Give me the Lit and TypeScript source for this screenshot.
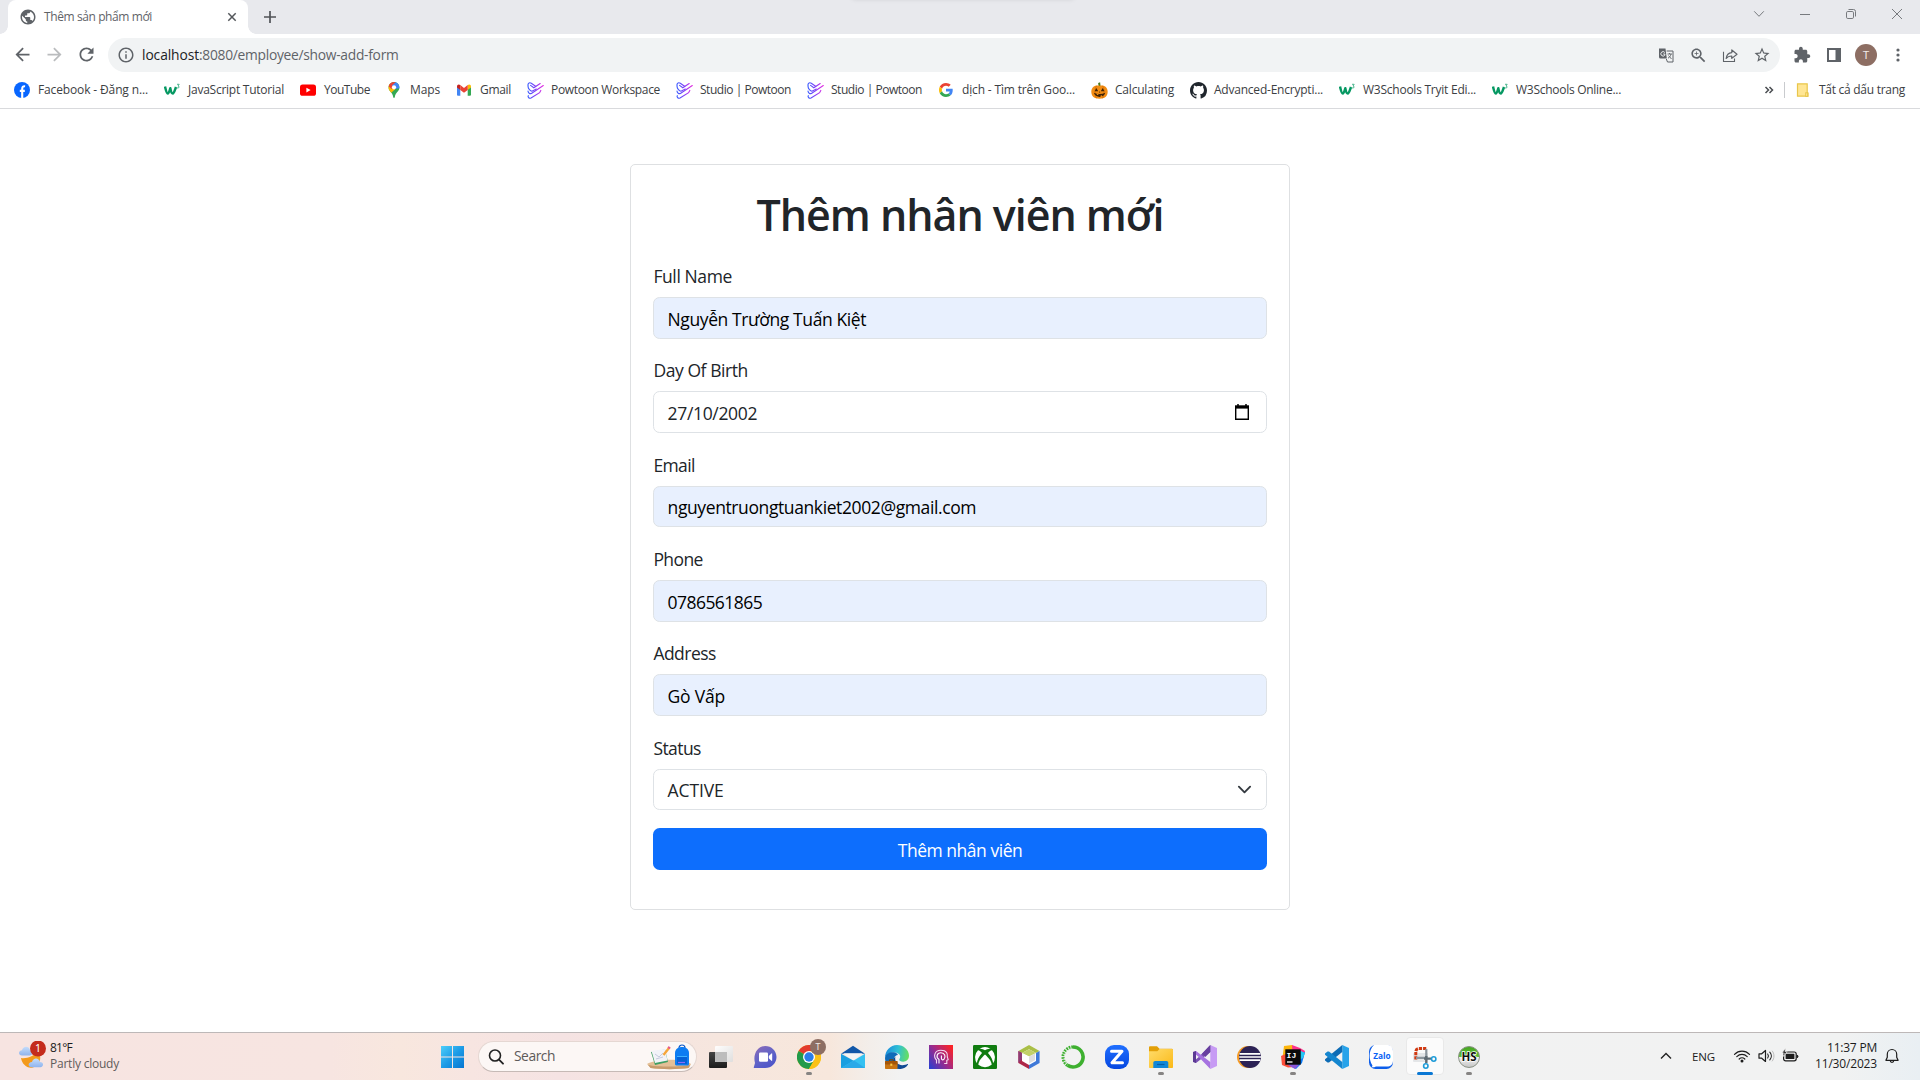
import { LitElement, html, css, svg, TemplateResult } from "lit";
import { customElement, property } from "lit/decorators.js";
import { classMap } from "lit/directives/class-map.js";

/** One line of text whose tracking is adjusted so that it spans a given width. */
@customElement("text-run")
class TextRun extends LitElement {
  @property({ type: Number }) span = 0;
  @property() text = "";

  static styles = css`
    :host { display: inline-block; white-space: pre; }
  `;

  render() {
    return html`<span class="run">${this.text}</span>`;
  }

  updated() {
    const run = this.renderRoot.querySelector(".run") as HTMLElement;
    run.style.letterSpacing = "0";
    const natural = run.getBoundingClientRect().width;
    const count = [...this.text].length;
    if (this.span && count) {
      run.style.letterSpacing = `${(this.span - natural) / count}px`;
    }
  }
}

const icon = (size: number, box: string, body: TemplateResult) =>
  html`<svg width=${size} height=${size} viewBox=${box} fill="none">${body}</svg>`;

const material = (size: number, d: string) => icon(size, "0 0 24 24", svg`<path fill="currentColor" d=${d}/>`);

const BACK = "M20 11H7.83l5.59-5.59L12 4l-8 8 8 8 1.41-1.41L7.83 13H20v-2z";
const FORWARD = "M12 4l-1.41 1.41L16.17 11H4v2h12.17l-5.58 5.59L12 20l8-8z";
const RELOAD =
  "M17.65 6.35C16.2 4.9 14.21 4 12 4c-4.42 0-7.99 3.58-7.99 8s3.57 8 7.99 8c3.73 0 6.84-2.55 7.73-6h-2.08c-.82 2.33-3.04 4-5.65 4-3.31 0-6-2.69-6-6s2.69-6 6-6c1.66 0 3.14.69 4.22 1.78L13 11h7V4l-2.35 2.35z";
const INFO =
  "M11 7h2v2h-2zm0 4h2v6h-2zm1-9C6.48 2 2 6.48 2 12s4.48 10 10 10 10-4.48 10-10S17.52 2 12 2zm0 18c-4.41 0-8-3.59-8-8s3.59-8 8-8 8 3.59 8 8-3.59 8-8 8z";
const STAR =
  "M22 9.24l-7.19-.62L12 2 9.19 8.63 2 9.24l5.46 4.73L5.82 21 12 17.27 18.18 21l-1.63-7.03L22 9.24zM12 15.4l-3.76 2.27 1-4.28-3.32-2.88 4.38-.38L12 6.1l1.71 4.04 4.38.38-3.32 2.88 1 4.28L12 15.4z";
const PUZZLE =
  "M20.5 11H19V7c0-1.1-.9-2-2-2h-4V3.5C13 2.12 11.88 1 10.5 1S8 2.12 8 3.5V5H4c-1.1 0-1.99.9-1.99 2v3.8H3.5c1.49 0 2.7 1.21 2.7 2.7s-1.21 2.7-2.7 2.7H2V20c0 1.1.9 2 2 2h3.8v-1.5c0-1.49 1.21-2.7 2.7-2.7 1.49 0 2.7 1.21 2.7 2.7V22H17c1.1 0 2-.9 2-2v-4h1.5c1.38 0 2.5-1.12 2.5-2.5S21.88 11 20.5 11z";
const ZOOM =
  "M15.5 14h-.79l-.28-.27C15.41 12.59 16 11.11 16 9.5 16 5.91 13.09 3 9.5 3S3 5.91 3 9.5 5.91 16 9.5 16c1.61 0 3.09-.59 4.23-1.57l.27.28v.79l5 4.99L20.49 19l-4.99-5zm-6 0C7.01 14 5 11.99 5 9.5S7.01 5 9.5 5 14 7.01 14 9.5 11.99 14 9.5 14zm2.5-4h-2v2H9v-2H7V9h2V7h1v2h2v1z";
const GLOBE =
  "M12 2C6.48 2 2 6.48 2 12s4.48 10 10 10 10-4.48 10-10S17.52 2 12 2zm-1 17.93c-3.95-.49-7-3.85-7-7.93 0-.62.08-1.21.21-1.79L9 15v1c0 1.1.9 2 2 2v1.93zm6.9-2.54c-.26-.81-1-1.39-1.9-1.39h-1v-3c0-.55-.45-1-1-1H8v-2h2c.55 0 1-.45 1-1V7h2c1.1 0 2-.9 2-2v-.41c2.93 1.19 5 4.06 5 7.41 0 2.08-.8 3.97-2.1 5.39z";
const GITHUB =
  "M8 0C3.58 0 0 3.58 0 8c0 3.54 2.29 6.53 5.47 7.59.4.07.55-.17.55-.38 0-.19-.01-.82-.01-1.49-2.01.37-2.53-.49-2.69-.94-.09-.23-.48-.94-.82-1.13-.28-.15-.68-.52-.01-.53.63-.01 1.08.58 1.23.82.72 1.21 1.87.87 2.33.66.07-.52.28-.87.51-1.07-1.78-.2-3.64-.89-3.64-3.95 0-.87.31-1.59.82-2.15-.08-.2-.36-1.02.08-2.12 0 0 .67-.21 2.2.82.64-.18 1.32-.27 2-.27s1.36.09 2 .27c1.53-1.04 2.2-.82 2.2-.82.44 1.1.16 1.92.08 2.12.51.56.82 1.27.82 2.15 0 3.07-1.87 3.75-3.65 3.95.29.25.54.73.54 1.48 0 1.07-.01 1.93-.01 2.2 0 .21.15.46.55.38A8.01 8.01 0 0016 8c0-4.42-3.58-8-8-8z";

/* ---------- bookmark favicons, 16px ---------- */

const facebook = () => icon(16, "0 0 16 16", svg`
  <circle cx="8" cy="8" r="8" fill="#0866ff"/>
  <path d="M8.2 16V7c0-2 .8-2.9 2.9-2.7M5.8 8.9h5" stroke="#fff" stroke-width="2.1"/>`);

const w3 = () => icon(16, "0 0 16 16", svg`
  <path d="M1 4.600C2 9 2.700 11.500 3.700 11.500S5.500 9 6.300 6.300C6.900 9.500 7.700 11.500 8.800 11.500S10.900 8 12 5" stroke="#059862" stroke-width="2.500" stroke-linejoin="round"/>
  <path d="M13 2.300h2.200L14 4c1.600.1 1.500 2-.1 2-.5 0-.9-.2-1.100-.5" stroke="#3aae83" stroke-width=".9"/>`);

const youtube = () => icon(16, "0 0 16 16", svg`
  <rect y="2.4" width="16" height="11.4" rx="2.6" fill="#f00"/>
  <path d="M6.4 5.7 10.6 8.1 6.4 10.5z" fill="#fff"/>`);

const maps = () => icon(16, "0 0 16 16", svg`
  <path d="M8 0C5 0 2.6 2.4 2.6 5.4c0 1.5.5 2.6 1.3 3.7C5.700 11.300 6.800 12.500 7.200 15c.2 1.300 1.400 1.300 1.600 0 .4-2.500 1.500-3.700 3.300-5.900.8-1.100 1.300-2.200 1.300-3.700C13.400 2.400 11 0 8 0z" fill="#34a853"/>
  <path d="M3.900 9.100C3.100 8 2.600 6.900 2.600 5.400c0-1.300.4-2.400 1.200-3.400L9.700 6.800 5.200 10.700z" fill="#fbbc04"/>
  <path d="M3.800 2C4.800.8 6.300 0 8 0l1.700.3L5.800 7 2.700 4.500C2.800 3.500 3.200 2.700 3.800 2z" fill="#ea4335"/>
  <path d="M9.700.3c2.100.7 3.700 2.700 3.700 5.100l-.1.900L9.300 7 5.900 3.600z" fill="#4285f4"/>
  <circle cx="8" cy="5.300" r="2.100" fill="#fff"/>`);

const gmail = () => icon(16, "0 0 16 16", svg`
  <path d="M1 4.500v8.300c0 .5.4.9.9.9h2.400V7z" fill="#4285f4"/>
  <path d="M15 4.500v8.300c0 .5-.4.9-.9.9h-2.400V7z" fill="#34a853"/>
  <path d="M1 4.600C1 2.500 2.800 2 4.300 3.100V8L1 5.600z" fill="#c5221f"/>
  <path d="M15 4.600C15 2.500 13.200 2 11.700 3.100V8L15 5.600z" fill="#fbbc04"/>
  <path d="M4.300 3.100 8 5.900l3.700-2.800V8L8 10.700 4.300 8z" fill="#ea4335"/>`);

const powtoon = () => icon(17, "0 0 17 17", svg`
  <defs><linearGradient id="pt" x1="1" y1="0" x2="16" y2="0" gradientUnits="userSpaceOnUse">
    <stop stop-color="#3c5cff"/><stop offset=".55" stop-color="#8b3df5"/><stop offset="1" stop-color="#e52ee0"/></linearGradient></defs>
  <g stroke="url(#pt)" stroke-width="1.150" stroke-linecap="round">
    <path d="M8.600 4.300 4.300 1.200C2.800.2.900 1 1 2.900L1.100 4.800C1.200 6.800 3.300 9 5 9.200L9.300 7"/>
    <path d="M13.200 1.600 6.800 5.800 3.600 3.400"/>
    <path d="M16.300 3.500 4.400 11.400C2.800 12.300 1.200 11 1 9"/>
    <path d="M13.800 8.400 12.600 10.700 4 16C2.300 16.900.6 15.200 1.300 13.700"/>
  </g>`);

const google = () => icon(14, "0 0 48 48", svg`
  <path fill="#EA4335" d="M24 9.500c3.540 0 6.710 1.220 9.210 3.600l6.850-6.850C35.900 2.380 30.470 0 24 0 14.620 0 6.510 5.380 2.560 13.220l7.980 6.190C12.430 13.720 17.740 9.500 24 9.500z"/>
  <path fill="#4285F4" d="M46.980 24.550c0-1.570-.15-3.090-.38-4.550H24v9.020h12.940c-.58 2.960-2.260 5.480-4.780 7.180l7.730 6c4.510-4.180 7.090-10.360 7.090-17.650z"/>
  <path fill="#FBBC05" d="M10.530 28.590c-.48-1.450-.76-2.990-.76-4.590s.27-3.140.76-4.590l-7.980-6.190C.92 16.460 0 20.120 0 24c0 3.880.92 7.540 2.560 10.780l7.970-6.190z"/>
  <path fill="#34A853" d="M24 48c6.480 0 11.930-2.130 15.890-5.810l-7.730-6c-2.150 1.450-4.920 2.300-8.160 2.300-6.260 0-11.570-4.220-13.470-9.910l-7.980 6.190C6.510 42.620 14.620 48 24 48z"/>`);

const pumpkin = () => icon(17, "0 0 16 16", svg`
  <path d="M7.200 4 6.700 1 8.600.2 9 4z" fill="#4c7a1f"/>
  <path d="M8 3.500C3.500 2.300.3 5 .3 9.200s2.800 6.500 7.700 6.500 7.700-2.300 7.700-6.500S12.500 2.300 8 3.500z" fill="#f28c13"/>
  <path d="M5.300 3.600c-2 2.800-2 8.500 0 11.800M10.700 3.600c2 2.800 2 8.500 0 11.800" stroke="#d06c05" stroke-width=".7"/>
  <path d="M3.400 8.600 5 5.700l1.800 2.900zM9.200 8.600 11 5.700l1.700 2.900zM7.400 9.900l.7-1.100.7 1.100zM2.700 10.200c3.200 1.500 7.500 1.500 10.700 0-.6 2.600-2.600 3.800-5.300 3.800s-4.700-1.200-5.400-3.800z" fill="#402306"/>
  <path d="M5.500 11v1.300h1.400v-1.100zM9 12.700V14h1.400v-1.500z" fill="#f28c13"/>`);

const github = () => icon(17, "0 0 16 16", svg`<path fill="#20262d" d=${GITHUB}/>`);

/* ---------- taskbar app icons, 24px ---------- */

const taskView = () => icon(26, "0 0 26 26", svg`
  <defs><linearGradient id="tv1" x1="0" y1="0" x2="0" y2="1"><stop stop-color="#454545"/><stop offset="1" stop-color="#1c1c1c"/></linearGradient>
  <linearGradient id="tv2" x1="0" y1="0" x2="1" y2="1"><stop stop-color="#fff"/><stop offset="1" stop-color="#dedede"/></linearGradient></defs>
  <rect x="1" y="8" width="18" height="16" rx="1" fill="url(#tv1)"/>
  <rect x="7" y="2" width="18" height="16" rx="1" fill="url(#tv2)" opacity=".95"/>
  <rect x="7" y="8" width="12" height="10" fill="#bdbdbd"/>`);

const chat = () => icon(24, "0 0 24 24", svg`
  <defs><linearGradient id="ch" x1="4" y1="1" x2="18" y2="23" gradientUnits="userSpaceOnUse"><stop stop-color="#8a6bb9"/><stop offset=".5" stop-color="#6264c7"/><stop offset="1" stop-color="#4b53c9"/></linearGradient></defs>
  <path d="M12.200 1C18.500 1 23.500 5.900 23.500 12s-5 11-11.300 11H1.500c-1 0-.8-.8-.5-1.500L2 18C-.5 9 5 1 12.200 1z" fill="url(#ch)"/>
  <rect x="6" y="7.500" width="9" height="9.200" rx="1.300" fill="#fff"/><path d="M15.800 11 18.700 8.300c.3 0 .5.200.5.500v6.600c0 .3-.2.500-.5.500L15.800 13.300z" fill="#fff"/>`);

const chrome = () => icon(24, "0 0 24 24", svg`
  <circle cx="12" cy="12" r="12" fill="#fbc116"/>
  <path d="M12 12 1.600 6A12 12 0 0 1 22.400 6z" fill="#e33b2e"/>
  <path d="M1.600 6A12 12 0 0 0 12 24L17.200 15 12 12z" fill="#229a4a"/>
  <path d="M12 6H22.400A12 12 0 0 1 12 24L17.200 15z" fill="#fbc116"/>
  <circle cx="12" cy="12" r="6" fill="#fff"/><circle cx="12" cy="12" r="4.700" fill="#2b7de9"/>`);

const mail = () => icon(24, "0 0 24 24", svg`
  <path d="M0 8.800 12 .8l12 8z" fill="#1257a8"/>
  <path d="M2.500 8.300h19L12 16z" fill="#f5f5f5"/>
  <path d="M0 8.800 14 16.500 24 23H0z" fill="#1a9fe0"/>
  <path d="M24 8.800V23H0z" fill="#35c1f1"/><path d="M0 23 13 15.500 24 23z" fill="#2aa9e8"/>`);

const edge = () => icon(24, "0 0 24 24", svg`
  <defs><linearGradient id="eg" x1="1" y1="6" x2="24" y2="10" gradientUnits="userSpaceOnUse"><stop stop-color="#1b8fdc"/><stop offset=".5" stop-color="#2fc0d5"/><stop offset="1" stop-color="#6be05a"/></linearGradient></defs>
  <path d="M12 0C18.600 0 24 4.900 24 10.500c0 4-2.600 6.200-5.800 6.200-2.500 0-4-.8-4-1.900 0-.8 1-1.300 1-3.300 0-2.300-2.700-4-6.200-4C5 7.500 1 9.500 0 13 0 5.500 5.400 0 12 0z" fill="url(#eg)"/>
  <path d="M0 13C.6 9 4.600 7 8.600 7.300c2.400.2 4 1.400 4.300 2.700C9 10.500 8 14 9.700 17.500c1 2.200 3 4 5.500 5.600-1 .6-2 .9-3.200.9C5 24 0 19 0 13z" fill="#0f6bb8"/>
  <path d="M10.500 11.500c-1.500 5 2.500 9 7 8.700 2 0 3.800-.6 4.900-1.100.6-.2.8.2.5.7C21 22.700 17.400 24.300 14 24c-3-1-6-4-5.500-8.500.1-2 .9-3.300 2-4z" fill="#104a93"/>
  <rect y="16" width="12.500" height="8" rx=".8" fill="#c87412"/><rect y="16" width="12.500" height="3.500" rx=".8" fill="#a45508"/><rect x="5.300" y="18.600" width="2" height="2.200" fill="#f7c948"/>
  <path d="M4.500 16v-1.200h3.700V16" stroke="#7a4207"/>`);

const mindHead = () => icon(24, "0 0 24 24", svg`
  <defs><linearGradient id="mh" x1="0" y1="22" x2="24" y2="4" gradientUnits="userSpaceOnUse"><stop stop-color="#2b3ed0"/><stop offset=".5" stop-color="#9b2b8d"/><stop offset="1" stop-color="#fb2327"/></linearGradient></defs>
  <rect width="24" height="24" fill="url(#mh)"/>
  <path d="M7.500 18.500V15C4 11.500 5.500 5.300 11.800 5.300S18.700 9 18.300 12l.9 2.700-1.400.6v3.200h-2.600" stroke="#f3d9f0" stroke-width="1.100"/>
  <path d="M10 18.500v-4C6.500 12 8 7.800 11.900 7.800s5.200 4 3.100 6.300c-1.300 1.300-2.600.8-2.600-.8V10.500" stroke="#fff" stroke-width="1.100"/>`);

const xbox = () => icon(24, "0 0 24 24", svg`
  <rect width="24" height="24" rx="1.200" fill="#107c10"/>
  <path d="M12 9.500C15 12 19 17 18.600 19.700a10 10 0 0 1-13.200 0C5 17 9 12 12 9.500z" fill="#fff"/>
  <path d="M5 5.300C6.500 5.500 8 6.800 9 8 5.500 12 3.800 16 4 18.200A10 10 0 0 1 5 5.300z" fill="#fff"/>
  <path d="M19 5.300C17.500 5.500 16 6.800 15 8c3.500 4 5.200 8 5 10.200A10 10 0 0 0 19 5.300z" fill="#fff"/>
  <path d="M6.500 3.800A10 10 0 0 1 17.500 3.800C15.500 3.300 13.500 4.300 12 5.300 10.500 4.300 8.500 3.300 6.500 3.800z" fill="#fff"/>`);

const netbeans = () => icon(24, "0 0 24 24", svg`
  <path d="M12 0 22.600 6v12L12 24 1.400 18V6z" fill="#fff"/>
  <path d="M12 0 22.600 6 19 8 12 4.200 5 8 1.400 6z" fill="#a9bf47"/>
  <path d="M5 8 12 4.200 19 8 12 11.500z" fill="#c2d069"/>
  <path d="M1.400 6 5 8v8l7 4v4L1.400 18z" fill="#ad2748"/><path d="M1.400 6 5 8v6L1.400 18z" fill="#8d3c76"/>
  <path d="M22.600 6 19 8v8l-7 4v4l10.600-6z" fill="#3f79d8"/>
  <path d="M6 8.500 12 11.500V18.500L6 15.200z" fill="#fff"/><path d="M18 8.500 12 11.500V18.500L18 15.200z" fill="#dedee0"/>`);

const anaconda = () => icon(24, "0 0 24 24", svg`
  <path d="M12 2a10 10 0 1 1-5.500 18.300" stroke="#3eb030" stroke-width="3.600"/>
  <path d="M12 2A10 10 0 0 0 6.500 20.300" stroke="#3eb030" stroke-width="3.200" stroke-dasharray="1.700 .9"/>
  <path d="M9.500 3.800A9 9 0 0 0 6.300 19" stroke="#f2f2f2" stroke-width=".8" stroke-dasharray="2 1"/>`);

const zApp = () => icon(24, "0 0 24 24", svg`
  <defs><linearGradient id="za" x1="0" y1="0" x2="0" y2="1"><stop stop-color="#1f6fff"/><stop offset="1" stop-color="#0647e0"/></linearGradient></defs>
  <rect width="24" height="24" rx="9" fill="url(#za)"/>
  <path d="M6.500 6.200H17L7 17.800H17.500" stroke="#fff" stroke-width="3" stroke-linecap="round" stroke-linejoin="round"/>`);

const explorer = () => icon(24, "0 0 24 24", svg`
  <defs><linearGradient id="fx" x1="0" y1="0" x2="1" y2="1"><stop stop-color="#ffdc6b"/><stop offset="1" stop-color="#fbb917"/></linearGradient></defs>
  <path d="M0 2.500C0 1.700.5 1.200 1.300 1.200H8L10.500 3.700H22.500c.8 0 1.500.6 1.500 1.400V10H0z" fill="#e3a008"/>
  <path d="M0 6.200H8.300L10.600 3.900H22.800c.7 0 1.200.5 1.200 1.200V22c0 .6-.4 1-1 1H1c-.6 0-1-.4-1-1z" fill="url(#fx)"/>
  <path d="M4.300 23v-5.300c0-1 .8-1.800 1.800-1.800H17.500c1 0 1.800.8 1.800 1.800V23z" fill="#1287d6"/><path d="M8 19.500h7.500" stroke="#075fa5" stroke-width="1.200"/>`);

const visualStudio = () => icon(24, "0 0 24 24", svg`
  <path d="M17.300 0 24 3v18l-6.700 3z" fill="#c79bf4"/>
  <path d="M17.300 0 5.500 12.300 2.200 15 0 14.200 1 17l2 1 14.300-11z" fill="#7a52b4"/>
  <path d="M17.300 24 5.500 11.700 2.200 9 0 9.800V7l3-1 14.300 11z" fill="#a673e0"/>
  <path d="M0 7 3 6v12l-3-1z" fill="#5c3a94"/><path d="M17.300 0 9 8.700l3.300 3.200 5-4.900z" fill="#68409f"/>`);

const eclipse = () => icon(24, "0 0 24 24", svg`
  <circle cx="11" cy="12" r="11" fill="#f59a23"/><circle cx="13" cy="12" r="11" fill="#2c2255"/>
  <path d="M2.500 8.900H23.300M2.200 12H24M2.500 15.100H23.300" stroke="#fff" stroke-width="1.600"/>`);

const intellij = () => icon(24, "0 0 24 24", svg`
  <path d="M3 1 11 0l3 4-4 8-9 4z" fill="#fdb60d"/><path d="M11 0l8 3 5 3-2 8-10 2z" fill="#ff318c"/>
  <path d="M24 7 21 18l-6 6-8-4 6-8z" fill="#087cfa"/><path d="M0 11l7-3 6 14-6 .5L1 20z" fill="#fc4f3a"/><path d="M18 5l6 3-2 5-4 2z" fill="#24c8f5"/><path d="M7 20l7 4 4-4-8-3z" fill="#8b57d8"/>
  <rect x="4.300" y="4.300" width="15.400" height="15.400" fill="#0a0a0a"/>
  <text class="logo-ij" x="5.600" y="12.800" fill="#fff">IJ</text><path d="M6 17h5.500" stroke="#fff" stroke-width="1.300"/>`);

const vscode = () => icon(24, "0 0 24 24", svg`
  <path d="M17.300 0 24 3v18l-6.700 3z" fill="#27a3ea"/>
  <path d="M17.300 0v7L4 17.500 2.500 17.600 0 15.500v-1.300z" fill="#0d6cb5"/>
  <path d="M17.300 24v-7L4 6.500 2.500 6.400 0 8.500v1.300z" fill="#1486cf"/>`);

const zalo = () => icon(24, "0 0 24 24", svg`
  <rect width="24" height="24" rx="6.500" fill="#0c5eea"/>
  <path d="M9 0h9c4 0 6 2.500 6 6.500v9c0 4-2.500 6-6 6H7c-1.500.7-3 1-4.500.8 1-.9 1-1.700.7-2.300C-.5 14-.5 5 5 0z" fill="#fff"/>
  <text class="logo-zalo" x="4.200" y="14" fill="#0b63f5" textLength="17.500" lengthAdjust="spacingAndGlyphs">Zalo</text>`);

const snip = () => icon(24, "0 0 24 24", svg`
  <rect x="0" y="8" width="15" height="9" rx="1" fill="#e4e6e8"/>
  <path d="M2.800 14.500v-8a3.200 3.200 0 0 1 3-3h8" stroke="#d13a12" stroke-width="3" stroke-dasharray="3.200 1"/>
  <path d="M3 12.800h10.300V4" stroke="#8b959c" stroke-width="2.200"/><path d="M13.300 11v7M11 13.600h7" stroke="#5f6b73" stroke-width="2.400"/>
  <circle cx="12.800" cy="21" r="2.200" stroke="#1d9bd8" stroke-width="1.600"/><circle cx="20.700" cy="14" r="2.200" stroke="#1d9bd8" stroke-width="1.600"/>`);

const heidi = () => icon(24, "0 0 24 24", svg`
  <defs><linearGradient id="hs" x1="0" y1="0" x2="0" y2="1"><stop stop-color="#43a51f"/><stop offset=".5" stop-color="#62c23a"/><stop offset=".51" stop-color="#f3f3f3"/><stop offset="1" stop-color="#c3c3c3"/></linearGradient></defs>
  <circle cx="12" cy="12" r="10.500" fill="url(#hs)" stroke="#8c9388" stroke-width="1"/>
  <text class="logo-hs" x="12" y="16.200" fill="#111" stroke="#fff" stroke-width="1.400" paint-order="stroke" text-anchor="middle">HS</text>`);

interface TaskApp { draw: () => TemplateResult; running?: boolean; active?: boolean; badge?: string; }

const APPS: TaskApp[] = [
  { draw: taskView }, { draw: chat }, { draw: chrome, running: true, badge: "T" }, { draw: mail }, { draw: edge },
  { draw: mindHead }, { draw: xbox }, { draw: netbeans }, { draw: anaconda }, { draw: zApp },
  { draw: explorer, running: true }, { draw: visualStudio }, { draw: eclipse }, { draw: intellij, running: true },
  { draw: vscode }, { draw: zalo }, { draw: snip, active: true }, { draw: heidi, running: true },
];

const BOOKMARKS: { draw: () => TemplateResult; title: string; span: number }[] = [
  { draw: facebook, title: "Facebook - Đăng n...", span: 110 },
  { draw: w3, title: "JavaScript Tutorial", span: 96 },
  { draw: youtube, title: "YouTube", span: 46 },
  { draw: maps, title: "Maps", span: 30 },
  { draw: gmail, title: "Gmail", span: 31 },
  { draw: powtoon, title: "Powtoon Workspace", span: 109 },
  { draw: powtoon, title: "Studio | Powtoon", span: 91 },
  { draw: powtoon, title: "Studio | Powtoon", span: 91 },
  { draw: google, title: "dịch - Tìm trên Goo...", span: 113 },
  { draw: pumpkin, title: "Calculating", span: 59 },
  { draw: github, title: "Advanced-Encrypti...", span: 109 },
  { draw: w3, title: "W3Schools Tryit Edi...", span: 113 },
  { draw: w3, title: "W3Schools Online...", span: 105 },
];

const FIELDS: { label: string; labelSpan: number; value: string; span: number; kind: "filled" | "date" | "select" }[] = [
  { label: "Full Name", labelSpan: 78.5, value: "Nguyễn Trường Tuấn Kiệt", span: 198.5, kind: "filled" },
  { label: "Day Of Birth", labelSpan: 94.5, value: "27/10/2002", span: 89.5, kind: "date" },
  { label: "Email", labelSpan: 41.5, value: "nguyentruongtuankiet2002@gmail.com", span: 308.5, kind: "filled" },
  { label: "Phone", labelSpan: 49.5, value: "0786561865", span: 94.5, kind: "filled" },
  { label: "Address", labelSpan: 62.5, value: "Gò Vấp", span: 57.5, kind: "filled" },
  { label: "Status", labelSpan: 47.5, value: "ACTIVE", span: 56, kind: "select" },
];

@customElement("browser-chrome")
class BrowserChrome extends LitElement {
  static styles = css`
    :host { display: block; color: #5f6368; }
    svg { display: block; flex: none; }
    .strip { position: relative; height: 34px; background: #e8e9ed; display: flex; padding-left: 8px; }
    .strip-shadow { position: absolute; left: 852px; top: -7px; width: 222px; height: 5px; border-radius: 4px; box-shadow: 0 1px 5px rgba(0, 0, 0, 0.13); }
    .tab { position: relative; width: 240px; box-sizing: border-box; background: #fff; border-radius: 8px 8px 0 0; display: flex; align-items: center; padding: 0 9px 0 11px; }
    .tab::before, .tab::after { content: ""; position: absolute; bottom: 0; width: 8px; height: 8px; }
    .tab::before { left: -8px; background: radial-gradient(circle at 0 0, transparent 7.5px, #fff 8px); }
    .tab::after { right: -8px; background: radial-gradient(circle at 100% 0, transparent 7.5px, #fff 8px); }
    .tab-title { margin: -1px 0 0 7px; flex: 1; }
    .new-tab { width: 44px; display: grid; place-items: center; height: 34px; }
    .window { margin-left: auto; display: flex; color: #777a7e; height: 28px; }
    .window span { width: 46px; display: grid; place-items: center; }
    .toolbar { height: 38px; display: flex; align-items: center; padding-top: 4px; box-sizing: border-box; background: #fff; }
    .nav { width: 32px; display: grid; place-items: center; margin-top: -1px; }
    .nav.first { margin-left: 6px; }
    .nav.off { color: #babcbe; }
    .omni { width: 1672px; height: 34px; border-radius: 17px; background: #f1f3f4; margin-left: 6px; box-sizing: border-box; padding: 0 2px 0 9px; display: flex; align-items: center; }
    .url { flex: 1; font-size: 13.8px; margin: -1px 0 0 7px; display: flex; }
    .host { color: #202124; }
    .slot { width: 32px; height: 34px; display: grid; place-items: center; flex: none; }
    .ext { margin-left: 6px; }
    .avatar { width: 22px; height: 22px; border-radius: 50%; background: #8d6e63; color: #f1eae8; font: 11px Roboto, "Noto Sans", sans-serif; display: grid; place-items: center; }
    .marks { height: 36px; display: flex; align-items: center; gap: 16px; padding: 0 15px 0 14px; background: #fff; border-bottom: 1px solid #d9dadd; color: #3c4043; }
    .marks text-run { margin-top: -2px; }
    .mark { display: flex; align-items: center; gap: 8px; }
    .fav { width: 16px; height: 16px; display: grid; place-items: center; }
    .all { margin-left: auto; display: flex; align-items: center; }
    .rule { width: 1px; height: 16px; background: #c9cbce; margin: 0 11px 0 10px; }
    .all text-run { margin-left: 9px; }
  `;

  render() {
    return html`
      <div class="strip">
        <div class="strip-shadow"></div>
        <div class="tab">
          ${material(18, GLOBE)}
          <text-run class="tab-title" span="108" text="Thêm sản phẩm mới"></text-run>
          ${icon(14, "0 0 14 14", svg`<path d="m3.300 3.300 7.400 7.400m0-7.400-7.400 7.400" stroke="#54575b" stroke-width="1.500"/>`)}
        </div>
        <div class="new-tab">${icon(14, "0 0 14 14", svg`<path d="M7 1v12M1 7h12" stroke="#505357" stroke-width="1.700"/>`)}</div>
        <div class="window">
          <span>${icon(12, "0 0 12 12", svg`<path d="m1.200 3.300 4.800 5 4.800-5" stroke="currentColor"/>`)}</span>
          <span>${icon(12, "0 0 12 12", svg`<path d="M1 6.500h10" stroke="currentColor"/>`)}</span>
          <span>${icon(12, "0 0 12 12", svg`<rect x="1.500" y="3.500" width="7" height="7" rx="1.300" stroke="currentColor"/><path d="M3.500 1.500h5a2 2 0 0 1 2 2v5" stroke="currentColor"/>`)}</span>
          <span>${icon(12, "0 0 12 12", svg`<path d="m1 1 10 10M11 1 1 11" stroke="currentColor"/>`)}</span>
        </div>
      </div>
      <div class="toolbar">
        <div class="nav first">${material(21, BACK)}</div>
        <div class="nav off">${material(21, FORWARD)}</div>
        <div class="nav">${material(21, RELOAD)}</div>
        <div class="omni">
          ${material(18, INFO)}
          <div class="url"><text-run class="host" span="57" text="localhost"></text-run><text-run span="199.500" text=":8080/employee/show-add-form"></text-run></div>
          <span class="slot">${icon(16, "0 0 16 16", svg`
            <path d="M1 1.500h6.500l1.300 10H2.500A1.500 1.500 0 0 1 1 10z" fill="#5f6368"/>
            <path d="M6.800 5.500A2.200 2.200 0 1 0 6.800 8.200V7H5.200" stroke="#f1f3f4" stroke-width="1"/>
            <path d="M8.600 4H15v11H9.500l-1.200-3" stroke="#5f6368"/><path d="M9.500 7h4.500M11.500 6v1M13 7c-.3 2-1.700 3.500-3 4.200M10.500 8.500 13.500 12" stroke="#5f6368" stroke-width=".9"/>`)}</span>
          <span class="slot">${material(19, ZOOM)}</span>
          <span class="slot">${icon(16, "0 0 16 16", svg`
            <path d="M1.500 4.800v9.700h11V11.500" stroke="#5f6368" stroke-width="1.100"/>
            <path d="M9.800 5.600C6.500 5.800 4.600 8 4.200 11.500c1.400-1.900 3-2.500 5.600-2.500v2.400L15 7.300 9.800 3z" stroke="#5f6368" stroke-width="1.200" stroke-linejoin="round"/>`)}</span>
          <span class="slot">${material(18, STAR)}</span>
        </div>
        <span class="slot ext">${material(18, PUZZLE)}</span>
        <span class="slot">${icon(14, "0 0 14 14", svg`<rect x="1" y="1" width="12" height="12" stroke="#5f6368" stroke-width="2"/><path d="M8.500 1H13v12H8.500z" fill="#5f6368"/>`)}</span>
        <span class="slot"><span class="avatar">T</span></span>
        <span class="slot">${icon(16, "0 0 16 16", svg`<circle cx="8" cy="3" r="1.600" fill="#5f6368"/><circle cx="8" cy="8" r="1.600" fill="#5f6368"/><circle cx="8" cy="13" r="1.600" fill="#5f6368"/>`)}</span>
      </div>
      <div class="marks">
        ${BOOKMARKS.map((b) => html`<div class="mark"><span class="fav">${b.draw()}</span><text-run span=${b.span} text=${b.title}></text-run></div>`)}
        <div class="all">
          ${icon(10, "0 0 10 10", svg`<path d="m1.500 2 3 3-3 3M5.500 2l3 3-3 3" stroke="#4a4d51" stroke-width="1.500"/>`)}
          <span class="rule"></span>
          ${icon(14, "0 0 14 14", svg`<path d="M1.500.8H11.200V9.500L12 10v3.200H1.500z" fill="#ffe694" stroke="#e9c64b" stroke-width="1.200"/><rect x="9.700" y="9.800" width="2" height="3.600" fill="#ffe694" stroke="#e9c64b"/>`)}
          <text-run span="86" text="Tất cả dấu trang"></text-run>
        </div>
      </div>
    `;
  }
}

@customElement("employee-form")
class EmployeeForm extends LitElement {
  static styles = css`
    :host { display: block; width: 660px; box-sizing: border-box; border: 1px solid #dee0e2; border-radius: 5px; padding: 24px 22.4px 39.2px; font-size: 17.5px; line-height: 26.4px; color: #212529; background: #fff; }
    .title { margin: 0 0 20px; font-size: 43px; font-weight: 600; line-height: 52.8px; text-align: center; }
    .group { margin-bottom: 17.6px; }
    .label { display: block; margin-bottom: 8.8px; height: 26.4px; box-sizing: border-box; padding-top: 1px; }
    .input { height: 41.6px; box-sizing: border-box; border: 1px solid #dee2e6; border-radius: 6.600px; padding: 0 13.2px; display: flex; align-items: center; justify-content: space-between; }
    .input text-run, .submit text-run { margin-top: 2px; }
    .input.filled { background: #e8f0fe; color: #000; }
    .input svg { display: block; }
    .calendar { margin-right: 2px; }
    .submit { display: grid; place-items: center; width: 100%; height: 41.6px; border: 0; border-radius: 6.600px; background: #0d6efd; color: #fff; font: inherit; padding: 0; }
  `;

  private trailing(kind: string) {
    if (kind === "date")
      return html`<svg class="calendar" width="16" height="18" viewBox="0 0 16 18"><path d="M1.700 3.300h12.600v12.900H1.700z" fill="none" stroke="#000" stroke-width="1.400"/><path d="M1 2.600h14v3H1z"/><path d="M4 1v2M12 1v2" stroke="#000" stroke-width="1.500"/></svg>`;
    if (kind === "select")
      return html`<svg width="15" height="15" viewBox="0 0 16 16" fill="none"><path d="m2 5 6 6 6-6" stroke="#343a40" stroke-width="2" stroke-linecap="round" stroke-linejoin="round"/></svg>`;
    return "";
  }

  render() {
    return html`
      <h1 class="title"><text-run span="407" text="Thêm nhân viên mới"></text-run></h1>
      ${FIELDS.map((f) => html`
        <div class="group">
          <span class="label"><text-run span=${f.labelSpan} text=${f.label}></text-run></span>
          <div class=${classMap({ input: true, filled: f.kind === "filled" })}>
            <text-run span=${f.span} text=${f.value}></text-run>${this.trailing(f.kind)}
          </div>
        </div>`)}
      <button class="submit"><text-run span="124.500" text="Thêm nhân viên"></text-run></button>
    `;
  }
}

@customElement("task-bar")
class TaskBar extends LitElement {
  static styles = css`
    :host { display: grid; grid-template-columns: 430px 1fr auto; height: 48px; box-sizing: border-box; border-top: 1px solid #bdb8b8;
      background: linear-gradient(90deg, #f7e4e1 0, #f7e5e1 330px, #f8e7de 400px, #f7e5e1 470px, #f5e3e3 560px, #f6e6de 720px, #f7e7dc 830px, #f3eeea 870px, #f2f2f2 900px, #f1f2f2 1840px, #e9eff3 1920px); font-size: 12px; line-height: 16px; color: #1c1c1c; }
    svg { display: block; flex: none; }
    .weather { display: flex; align-items: center; padding: 0 0 1px 18px; gap: 2px; }
    .weather div { display: flex; flex-direction: column; }
    .muted { color: #615c5b; }
    .logo-badge { font: 10.500px "Noto Sans", sans-serif; }
    .center { display: flex; align-items: center; }
    .start { width: 48px; padding-left: 11px; box-sizing: border-box; }
    .search { width: 219px; height: 31px; margin-right: 2px; box-sizing: border-box; border: 1px solid #e5d7d2; border-bottom-color: #c6bab6; border-radius: 16px; background: #fcf7f5; display: flex; align-items: center; padding: 0 4px 0 9px; color: #5e5a59; font-size: 13.800px; }
    .search text-run { flex: 1; margin: -2px 0 0 10px; }
    .app { position: relative; width: 44px; height: 47px; display: grid; place-items: center; }
    .app.active::before { content: ""; position: absolute; left: 3px; top: 4px; width: 38px; height: 38px; background: #fbfbfb; border: 1px solid #e9e9e9; border-radius: 4px; box-sizing: border-box; }
    .app svg { position: relative; }
    .app.running::after, .app.active::after { content: ""; position: absolute; bottom: 5px; left: 19px; width: 6px; height: 3px; border-radius: 2px; background: #868483; }
    .app.active::after { left: 14px; width: 16px; background: #0a78d4; }
    .badge { position: absolute; left: 23px; top: 6px; width: 16px; height: 16px; border-radius: 50%; background: #8d6e63; color: #efe7e4; font: 9px/16px Roboto, sans-serif; text-align: center; }
    .logo-ij { font: bold 8px "Liberation Mono", monospace; }
    .logo-zalo { font: bold 8px "Open Sans", sans-serif; }
    .logo-hs { font: bold 11.500px "Noto Sans", sans-serif; }
    .tray { display: flex; align-items: center; padding: 0 20px 1px 0; }
    .lang { margin: 1px 18px 0 20px; font-size: 11.500px; }
    .status { display: flex; gap: 6px; margin-right: 16px; }
    .clock { display: flex; flex-direction: column; align-items: flex-end; margin-right: 7px; }
  `;

  render() {
    return html`
      <div class="weather">
        ${icon(30, "0 0 30 30", svg`
          <defs><linearGradient id="cl" x1="0" y1="0" x2="0" y2="1"><stop stop-color="#c5ddfb"/><stop offset="1" stop-color="#8fb4ee"/></linearGradient></defs>
          <path d="M3 17c6 1 12-2 17-6 4 4 3 13-5 15.500C9 28 4 23 3 17z" fill="#f39a1c"/>
          <path d="M4 14.500c-4 0-4-5 0-5.200C5 4.500 11 4.500 12 9c3 0 3.500 5 0 5.500z" fill="url(#cl)"/>
          <path d="M14 26.200c-4.500 0-4.500-5 0-5.200 1-4.800 7-4.800 8 0 4 0 4 5 .3 5.200z" fill="url(#cl)"/>
          <circle cx="20" cy="7.500" r="8" fill="#c42b1c"/><text class="logo-badge" x="20" y="11.300" text-anchor="middle" fill="#fff">1</text>`)}
        <div><text-run span="22" text="81°F"></text-run><text-run class="muted" span="69" text="Partly cloudy"></text-run></div>
      </div>
      <div class="center">
        <div class="start">${icon(24, "0 0 24 24", svg`
          <defs><linearGradient id="win" x1="0" y1="0" x2="24" y2="24" gradientUnits="userSpaceOnUse"><stop stop-color="#4fd0fb"/><stop offset=".5" stop-color="#1d9be6"/><stop offset="1" stop-color="#0572cf"/></linearGradient></defs>
          <path d="M0 1h11v10.500H0zM12 1h11v10.500H12zM0 12.500h11V23H0zM12 12.500h11V23H12z" fill="url(#win)"/>`)}</div>
        <div class="search">
          ${icon(16, "0 0 16 16", svg`<circle cx="7" cy="6.500" r="5.500" stroke="#222" stroke-width="1.600"/><path d="m11 10.700 4 4" stroke="#222" stroke-width="1.800" stroke-linecap="round"/>`)}
          <text-run span="41" text="Search"></text-run>
          <svg width="45" height="26" viewBox="0 0 45 26" fill="none">
            <path d="M0 20C8 15 36 14 44 20l-2 4c-10 1.500-28 1.500-38 0z" fill="#e3bf96"/><path d="M1 21c10 2 33 2 42 0l-1.500 3c-10 1.500-28 1.500-38 0z" fill="#c79b6c"/>
            <path d="M4 8 18 5.500 21 18 8 21z" fill="#3f9f63"/><path d="M4.500 7 11 6l7-1 2.500 11.500L8 19z" fill="#f2f3f8"/><path d="m8 10 4 3 4-4M9 15l7-2" stroke="#b9bfd6" stroke-width=".8"/>
            <path d="m16.500 11 5.500-7" stroke="#f6a63a" stroke-width="2.400"/><path d="m21.500 4.500 1.200-1.600" stroke="#e8598b" stroke-width="2.600"/>
            <path d="M32 4c0-4 6-4 6 0" stroke="#0a58c8" stroke-width="1.200"/><path d="M28 9c0-8 14-8 14 0v11c0 1-1 1.500-2 1.500H30c-1 0-2-.5-2-1.500z" fill="#0d7cf2"/><path d="M30 12.500h10V20H30z" fill="#0661d6"/><path d="M30 12.500h10" stroke="#3fb2ff"/><path d="M31 18.500h7" stroke="#8a6cf5" stroke-width="1.200"/>
          </svg>
        </div>
        ${APPS.map((a) => html`<div class=${classMap({ app: true, running: !!a.running, active: !!a.active })}>${a.draw()}${a.badge ? html`<span class="badge">${a.badge}</span>` : ""}</div>`)}
      </div>
      <div class="tray">
        ${icon(12, "0 0 12 12", svg`<path d="m1 8.500 5-5 5 5" stroke="#222" stroke-width="1.400"/>`)}
        <text-run class="lang" span="23" text="ENG"></text-run>
        <div class="status">
          ${icon(18, "0 0 18 18", svg`<g stroke="#1d1d1d" stroke-width="1.200" stroke-linecap="round"><path d="M1.500 7.300c4.200-4.300 10.800-4.300 15 0"/><path d="M3.800 9.700c3-3 7.400-3 10.400 0"/><path d="M6.200 12c1.700-1.700 3.900-1.700 5.600 0"/></g><circle cx="9" cy="14" r="1.500" fill="#1d1d1d"/>`)}
          ${icon(18, "0 0 18 18", svg`<path d="M2 6.800h2.700L8.500 3.500v11L4.700 11.200H2z" stroke="#1d1d1d" stroke-width="1.200" stroke-linejoin="round"/><path d="M10.700 7c.9 1.200.9 2.800 0 4M12.800 5.200c2 2.200 2 5.400 0 7.600" stroke="#1d1d1d" stroke-width="1.100" stroke-linecap="round"/><path d="M15 3.700c2.600 3 2.600 7.600 0 10.600" stroke="#bbb"/>`)}
          ${icon(18, "0 0 18 18", svg`<rect x="2.600" y="5" width="12.600" height="8.800" rx="2" stroke="#1d1d1d" stroke-width="1.200"/><rect x="4.600" y="6.800" width="8.800" height="5.200" rx=".6" fill="#1d1d1d"/><path d="M16 8.200c1.300 0 1.300 2.500 0 2.500z" fill="#1d1d1d" stroke="#1d1d1d"/><path d="M4.600 1 1 6h2.300L2.300 9.500 6.200 4.700H4z" fill="#1d1d1d" stroke="#f1f1f1" stroke-width=".7"/>`)}
        </div>
        <div class="clock"><text-run span="50" text="11:37 PM"></text-run><text-run span="62" text="11/30/2023"></text-run></div>
        ${icon(16, "0 0 16 16", svg`<path d="M8 1.500a4.700 4.700 0 0 0-4.700 4.700v3L1.900 12.300h12.200L12.700 9.200v-3A4.700 4.700 0 0 0 8 1.500zM6.200 12.500c.2 2.400 3.400 2.400 3.600 0" stroke="#1d1d1d" stroke-width="1.200" stroke-linejoin="round"/>`)}
      </div>
    `;
  }
}

@customElement("app-root")
class AppRoot extends LitElement {
  static styles = css`
    :host { display: flex; flex-direction: column; width: 1920px; height: 1080px; overflow: hidden; background: #fff; font-family: "Open Sans", "Noto Sans", sans-serif; font-size: 12px; }
    .page { flex: 1; padding-top: 55px; display: flex; justify-content: center; align-items: flex-start; }
  `;

  render() {
    return html`
      <browser-chrome></browser-chrome>
      <main class="page"><employee-form></employee-form></main>
      <task-bar></task-bar>
    `;
  }
}
